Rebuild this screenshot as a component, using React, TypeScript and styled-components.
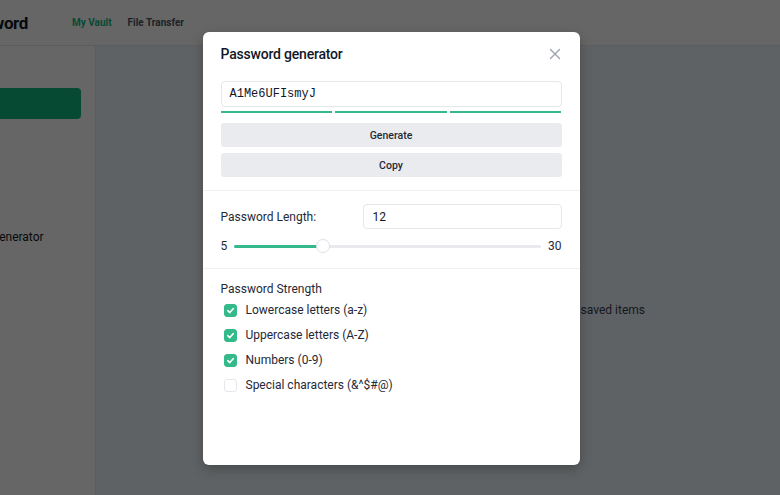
import React from "react";
import styled, { createGlobalStyle } from "styled-components";

const GlobalStyle = createGlobalStyle`
  html, body { margin: 0; padding: 0; }
  body { font-family: Roboto, "Liberation Sans", Arial, sans-serif; color: #111827; }
  * { box-sizing: border-box; }
`;

const Page = styled.div`
  width: 780px;
  height: 495px;
  overflow: hidden;
  position: relative;
  background: #ffffff;
`;

const Shell = styled.div`
  margin-left: -120px;
  width: 900px;
  height: 495px;
  display: flex;
  flex-direction: column;
`;

const Header = styled.header`
  height: 46px;
  flex-shrink: 0;
  display: flex;
  align-items: center;
  background: #fff;
  border-bottom: 1px solid #e5e7eb;
  padding-left: 76px;
`;

const Logo = styled.div`
  font-size: 17px;
  font-weight: 700;
  letter-spacing: -0.4px;
  width: 116px;
`;

const Nav = styled.nav`
  display: flex;
  gap: 16px;
`;

const NavItem = styled.span<{ $active?: boolean }>`
  font-size: 10px;
  font-weight: 700;
  color: ${(p) => (p.$active ? "#10b981" : "#4b5563")};
`;

const Body = styled.div`
  flex: 1;
  display: flex;
`;

const Sidebar = styled.aside`
  width: 216px;
  background: #fff;
  border-right: 1px solid #e5e7eb;
  padding: 42px 14px 0 14px;
  display: flex;
  flex-direction: column;
`;

const NewButton = styled.div`
  height: 31px;
  border-radius: 4px;
  background: #10b981;
`;

const SideItem = styled.div`
  margin-top: 111px;
  font-size: 12px;
  color: #111827;
  padding-left: 41px;
`;

const Main = styled.main`
  flex: 1;
  background: #eef4f9;
  display: flex;
  justify-content: flex-end;
  padding-top: 257px;
  padding-right: 135px;
`;

const Empty = styled.div`
  font-size: 12px;
  color: #374151;
`;

const Overlay = styled.div`
  position: absolute;
  inset: 0;
  background: rgba(0, 0, 0, 0.6);
  display: flex;
  align-items: center;
  justify-content: center;
  padding-left: 2px;
  padding-top: 2px;
`;

const Modal = styled.div`
  width: 377px;
  height: 433px;
  background: #fff;
  border-radius: 6px;
  box-shadow: 0 4px 12px rgba(0, 0, 0, 0.25);
  display: flex;
  flex-direction: column;
`;

const Section = styled.div<{ $border?: boolean; $top?: number; $bottom?: number }>`
  padding: ${(p) => (p.$border ? `${p.$top ?? 12}px 18px ${p.$bottom ?? 13}px` : "0 18px")};
  border-bottom: ${(p) => (p.$border ? "1px solid #eef0f2" : "none")};
`;

const TitleRow = styled.div`
  display: flex;
  justify-content: space-between;
  align-items: center;
  padding: 13px 18px 6px 18px;
`;

const Title = styled.h2`
  margin: 0;
  font-size: 14px;
  line-height: 18px;
  font-weight: 500;
  letter-spacing: -0.2px;
  color: #111827;
`;

const Close = styled.button`
  border: none;
  background: none;
  padding: 0;
  width: 12px;
  height: 12px;
  display: flex;
  color: #9ca3af;
  margin-right: 1px;
`;

const PwField = styled.div`
  height: 26px;
  border: 1px solid #e5e7eb;
  border-radius: 4px;
  display: flex;
  align-items: center;
  padding-left: 8px;
  font-family: "Liberation Mono", "Courier New", monospace;
  font-size: 12px;
  color: #111827;
`;

const Bars = styled.div`
  display: grid;
  grid-template-columns: repeat(3, 1fr);
  gap: 3px;
  margin-top: 4px;
`;

const Bar = styled.div`
  height: 2px;
  background: #34b98a;
`;

const ActionButton = styled.button`
  width: 100%;
  height: 24px;
  border: none;
  border-radius: 3px;
  background: #e9ebee;
  font-family: inherit;
  font-size: 10.5px;
  font-weight: 500;
  color: #1f2937;
  margin-top: 6px;
  &:first-of-type { margin-top: 10px; }
`;

const LengthRow = styled.div`
  display: flex;
  align-items: center;
  justify-content: space-between;
`;

const Label = styled.span`
  font-size: 12px;
  color: #1f2937;
`;

const NumField = styled.div`
  width: 199px;
  height: 25px;
  border: 1px solid #e5e7eb;
  border-radius: 4px;
  display: flex;
  align-items: center;
  padding-left: 9px;
  font-size: 12px;
  color: #111827;
`;

const SliderRow = styled.div`
  display: flex;
  align-items: center;
  gap: 7px;
  margin-top: 10px;
  font-size: 12px;
  color: #1f2937;
`;

const Track = styled.div`
  flex: 1;
  height: 3px;
  border-radius: 2px;
  background: #e8eaed;
  position: relative;
`;

const Fill = styled.div`
  position: absolute;
  left: 0;
  top: 0;
  bottom: 0;
  border-radius: 2px;
  background: #34b98a;
`;

const Thumb = styled.div`
  position: absolute;
  top: -6px;
  width: 14px;
  height: 14px;
  margin-left: -7px;
  border-radius: 50%;
  background: #fff;
  border: 1px solid #dde1e5;
`;

const StrengthTitle = styled.div`
  font-size: 12px;
  color: #1f2937;
  margin-top: 13px;
`;

const CheckList = styled.div`
  display: flex;
  flex-direction: column;
  gap: 9px;
  margin-top: 6px;
  padding-left: 3px;
`;

const CheckRow = styled.label`
  display: flex;
  align-items: center;
  gap: 9px;
  font-size: 12px;
  color: #1f2937;
  height: 16px;
`;

const Box = styled.span<{ $on: boolean }>`
  width: 13px;
  height: 13px;
  border-radius: 3px;
  background: ${(p) => (p.$on ? "#34b98a" : "#fff")};
  border: 1px solid ${(p) => (p.$on ? "#34b98a" : "#e5e7eb")};
  display: flex;
  align-items: center;
  justify-content: center;
`;

const options = [
  { label: "Lowercase letters (a-z)", on: true },
  { label: "Uppercase letters (A-Z)", on: true },
  { label: "Numbers (0-9)", on: true },
  { label: "Special characters (&^$#@)", on: false },
];

export default function App() {
  const min = 5;
  const max = 30;
  const value = 12;
  const frac = (value - min) / (max - min);
  const thumbPos = `calc(${frac} * (100% - 14px) + 7px)`;
  return (
    <Page>
      <GlobalStyle />
      <Shell>
        <Header>
          <Logo>Password</Logo>
          <Nav>
            <NavItem $active>My Vault</NavItem>
            <NavItem>File Transfer</NavItem>
          </Nav>
        </Header>
        <Body>
          <Sidebar>
            <NewButton />
            <SideItem>Password Generator</SideItem>
          </Sidebar>
          <Main>
            <Empty>No saved items</Empty>
          </Main>
        </Body>
      </Shell>
      <Overlay>
        <Modal>
          <TitleRow>
            <Title>Password generator</Title>
            <Close aria-label="Close">
              <svg width="12" height="12" viewBox="0 0 12 12" fill="none" stroke="currentColor" strokeWidth="1.4" strokeLinecap="round">
                <path d="M1.5 1.5L10.5 10.5M10.5 1.5L1.5 10.5" />
              </svg>
            </Close>
          </TitleRow>
          <Section $border $top={12} $bottom={13}>
            <PwField>A1Me6UFIsmyJ</PwField>
            <Bars>
              <Bar />
              <Bar />
              <Bar />
            </Bars>
            <ActionButton>Generate</ActionButton>
            <ActionButton>Copy</ActionButton>
          </Section>
          <Section $border $top={13} $bottom={15}>
            <LengthRow>
              <Label>Password Length:</Label>
              <NumField>12</NumField>
            </LengthRow>
            <SliderRow>
              <span>{min}</span>
              <Track>
                <Fill style={{ width: thumbPos }} />
                <Thumb style={{ left: thumbPos }} />
              </Track>
              <span>{max}</span>
            </SliderRow>
          </Section>
          <Section>
            <StrengthTitle>Password Strength</StrengthTitle>
            <CheckList>
              {options.map((o) => (
                <CheckRow key={o.label}>
                  <Box $on={o.on}>
                    {o.on && (
                      <svg width="9" height="9" viewBox="0 0 10 10" fill="none" stroke="#fff" strokeWidth="1.8" strokeLinecap="round" strokeLinejoin="round">
                        <path d="M2 5.2L4.2 7.3L8 3" />
                      </svg>
                    )}
                  </Box>
                  {o.label}
                </CheckRow>
              ))}
            </CheckList>
          </Section>
        </Modal>
      </Overlay>
    </Page>
  );
}
